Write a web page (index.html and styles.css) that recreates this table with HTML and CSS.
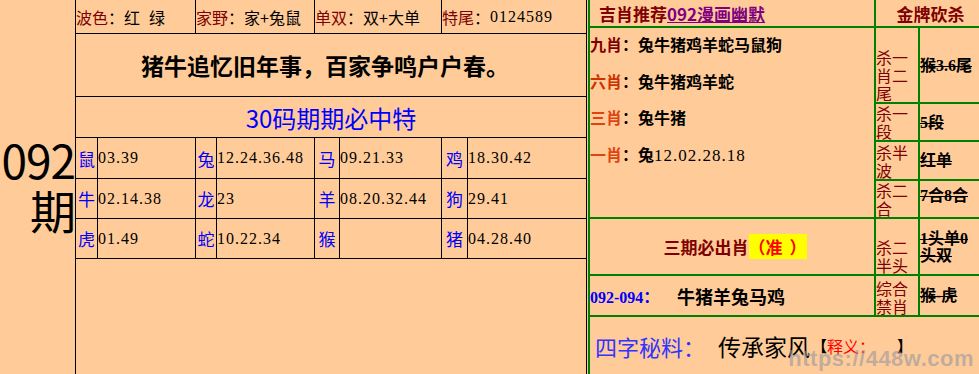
FILE: index.html
```html
<!DOCTYPE html>
<html lang="zh-CN">
<head>
<meta charset="utf-8">
<title>092期</title>
<link rel="stylesheet" href="styles.css">
</head>
<body>
<div class="page">
  <div class="issue"><div class="issue-text">092<br>期</div></div>
  <div class="mid">
    <div class="info">
      <div class="icell"><span class="lab">波色</span>：红<span class="sp"></span>绿</div>
      <div class="icell"><span class="lab">家野</span>：家+兔鼠</div>
      <div class="icell"><span class="lab">单双</span>：双+大单</div>
      <div class="icell"><span class="lab">特尾</span>：<span class="num">0124589</span></div>
    </div>
    <div class="poem">猪牛追忆旧年事，百家争鸣户户春。</div>
    <div class="t30">30码期期必中特</div>
    <div class="zgrid">
      <div class="z">鼠</div><div class="n">03.39</div>
      <div class="z">兔</div><div class="n">12.24.36.48</div>
      <div class="z">马</div><div class="n">09.21.33</div>
      <div class="z">鸡</div><div class="n">18.30.42</div>
      <div class="z">牛</div><div class="n">02.14.38</div>
      <div class="z">龙</div><div class="n">23</div>
      <div class="z">羊</div><div class="n">08.20.32.44</div>
      <div class="z">狗</div><div class="n">29.41</div>
      <div class="z">虎</div><div class="n">01.49</div>
      <div class="z">蛇</div><div class="n">10.22.34</div>
      <div class="z">猴</div><div class="n"></div>
      <div class="z">猪</div><div class="n">04.28.40</div>
    </div>
  </div>
  <div class="right">
    <div class="rhead">吉肖推荐<a class="link" href="#">092漫画幽默</a></div>
    <div class="rhead2">金牌砍杀</div>
    <div class="xiao">
      <div class="xl"><span class="x9">九肖</span>：兔牛猪鸡羊蛇马鼠狗</div>
      <div class="xl"><span class="x6">六肖</span>：兔牛猪鸡羊蛇</div>
      <div class="xl"><span class="x3">三肖</span>：兔牛猪</div>
      <div class="xl"><span class="x3">一肖</span>：兔<span class="num">12.02.28.18</span></div>
    </div>
    <div class="lbl ra">杀一肖二尾</div><div class="val ra">猴3.6尾</div>
    <div class="lbl rb">杀一段</div><div class="val rb">5段</div>
    <div class="lbl rc">杀半波</div><div class="val rc">红单</div>
    <div class="lbl rd">杀二合</div><div class="val rd">7合8合</div>
    <div class="sanqi">三期必出肖<span class="zhun">（准<span class="sp2"></span>）</span></div>
    <div class="lbl re">杀二半头</div><div class="val re">1头单0头双</div>
    <div class="combo"><span class="range">092-094：</span><span class="cz">牛猪羊兔马鸡</span></div>
    <div class="lbl rf">综合禁肖</div><div class="val rf">猴-虎</div>
    <div class="bottom"><span class="sz">四字秘料：</span><span class="cc">传承家风</span><span class="br">【</span><span class="sy">释义：</span><span class="br br2">】</span></div>
  </div>
</div>
<div class="wm">https://448w.com</div>
</body>
</html>
```
FILE: styles.css
```css
* { box-sizing: border-box; margin: 0; padding: 0; }
html, body { background: #FFCC99; }
body {
  width: 979px;
  height: 374px;
  overflow: hidden;
  position: relative;
  font-family: "Noto Sans CJK SC", sans-serif;
  color: #000;
}
.page { display: flex; height: 374px; }

.issue {
  width: 76px;
  border-right: 1px solid #000;
  display: flex;
  align-items: center;
  justify-content: flex-end;
  padding-bottom: 6px;
}
.issue-text {
  font-size: 46px;
  line-height: 50px;
  text-align: right;
  letter-spacing: -1px;
}

.mid {
  width: 511px;
  margin-right: 1px;
  border-right: 1px solid #000;
  display: flex;
  flex-direction: column;
}
.info {
  display: grid;
  grid-template-columns: 119px 118px 126px 144px;
  column-gap: 1px;
  background: #000;
  height: 34px;
  border-bottom: 1px solid #000;
}
.icell {
  background: #FFCC99;
  display: flex;
  align-items: center;
  font-size: 16px;
  white-space: nowrap;
}
.sp { display: inline-block; width: 9px; }
.lab { color: #800000; }
.num { font-family: "Liberation Serif", serif; letter-spacing: 1px; }

.poem {
  height: 63px;
  border-bottom: 1px solid #000;
  display: flex;
  align-items: center;
  justify-content: center;
  font-size: 23px;
  font-weight: bold;
  padding-right: 12px;
}
.t30 {
  height: 41px;
  border-bottom: 1px solid #000;
  display: flex;
  align-items: center;
  justify-content: center;
  font-size: 24px;
  color: #0000FF;
}
.zgrid {
  display: grid;
  grid-template-columns: 21px 97px 20px 97px 24px 101px 25px 118px;
  grid-template-rows: 40px 39px 39px;
  gap: 1px;
  background: #000;
  border-bottom: 1px solid #000;
}
.z, .n { background: #FFCC99; display: flex; align-items: center; }
.z { justify-content: center; color: #0000FF; font-size: 17px; }
.n { font-family: "Liberation Serif", serif; font-size: 16px; letter-spacing: 1px; }

.right {
  width: 391px;
  border-left: 2px solid #008000;
  background: #008000;
  display: grid;
  grid-template-columns: 284px 42px 59px;
  grid-template-rows: 26px 74px 36px 37px 36px 55px 39px 57px;
  gap: 2px;
}
.right > div { background: #FFCC99; }
.rhead {
  grid-column: 1; grid-row: 1;
  display: flex; align-items: center;
  padding-left: 9px;
  font-size: 17px; font-weight: bold; color: #800000;
}
.link { color: #800080; text-decoration: underline; }
.rhead2 {
  grid-column: 2 / 4; grid-row: 1;
  display: flex; align-items: center; justify-content: center;
  padding-left: 6px;
  font-size: 17px; font-weight: bold; color: #800000;
}
.xiao {
  grid-column: 1; grid-row: 2 / 6;
  display: flex; flex-direction: column;
  font-size: 16px; font-weight: bold;
}
.xl { height: 36.5px; line-height: 33px; white-space: nowrap; }
.x9 { color: #800000; }
.x6 { color: #CC3300; }
.x3 { color: #DD4411; }
.xl .num { letter-spacing: 1px; font-weight: normal; font-size: 17px; }

.lbl {
  grid-column: 2;
  display: flex; align-items: flex-end;
  font-size: 16px; line-height: 18px; color: #800000;
}
.val {
  grid-column: 3;
  display: flex; align-items: center;
  font-family: "Liberation Serif", "Noto Sans CJK SC", serif;
  font-size: 16px; line-height: 17px; font-weight: bold;
  text-decoration: line-through;
}
.ra { grid-row: 2; }
.rb { grid-row: 3; }
.rc { grid-row: 4; }
.rd { grid-row: 5; }
.re { grid-row: 6; }
.rf { grid-row: 7; }
.val.rd { padding-bottom: 8px; }

.sanqi {
  grid-column: 1; grid-row: 6;
  display: flex; align-items: center; justify-content: center;
  font-size: 17px; font-weight: bold; color: #800000;
  padding-left: 6px;
}
.zhun { background: #FFFF00; color: #FF0000; }
.sp2 { display: inline-block; width: 7px; }
.combo {
  grid-column: 1; grid-row: 7;
  display: flex; align-items: center;
  white-space: nowrap;
}
.range {
  font-family: "Liberation Serif", "Noto Sans CJK SC", serif;
  font-size: 16px; font-weight: bold; color: #0000FF;
  width: 87px;
}
.cz { font-size: 18px; font-weight: bold; }
.bottom {
  grid-column: 1 / 4; grid-row: 8;
  display: flex; align-items: center;
  padding-left: 5px;
  white-space: nowrap;
}
.sz { font-size: 22px; color: #3333FF; width: 123px; }
.cc { font-size: 23px; }
.br { font-size: 15px; font-weight: bold; margin-left: 2px; }
.br2 { margin-left: 22px; }
.sy { font-size: 16px; color: #FF0000; }

.wm {
  position: absolute;
  right: 5px;
  bottom: 2px;
  font-family: "Liberation Sans", sans-serif;
  font-weight: bold;
  font-size: 22px;
  color: rgba(150, 150, 160, 0.6);
  letter-spacing: 0.5px;
}
```
